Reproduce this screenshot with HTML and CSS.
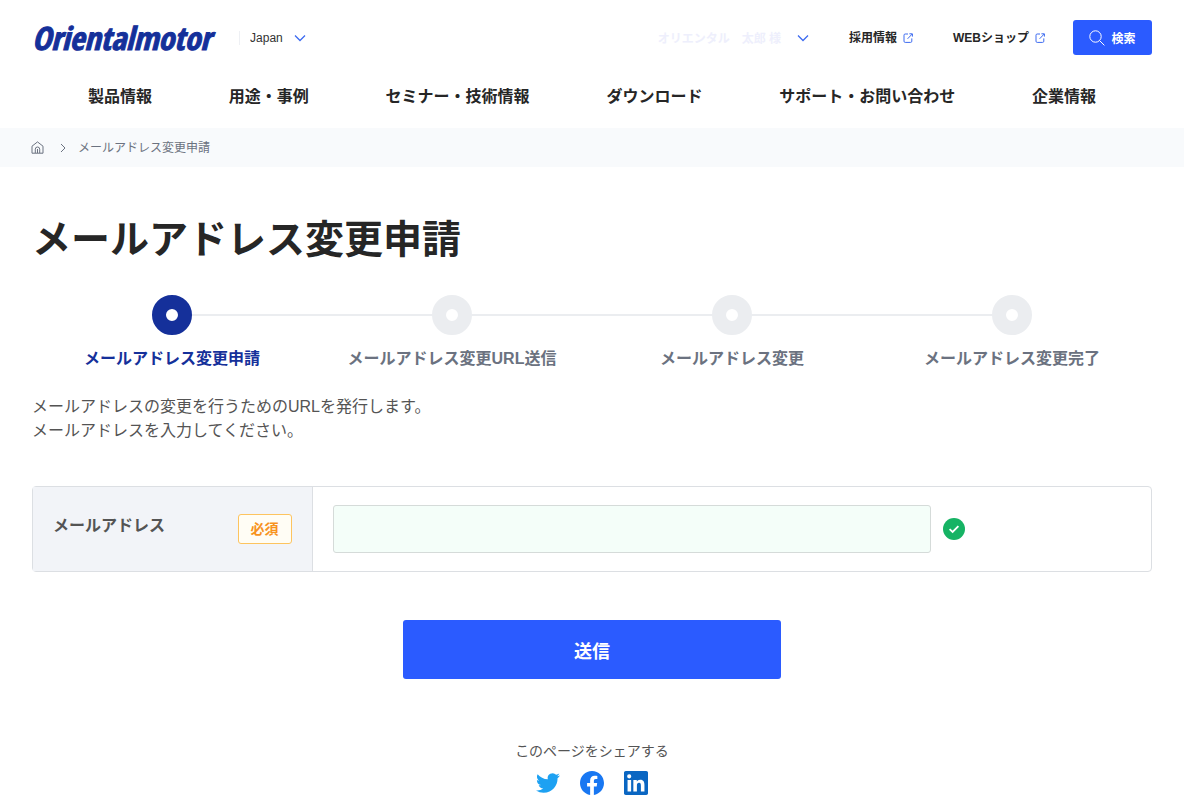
FILE: index.html
```html
<!DOCTYPE html>
<html lang="ja">

<head>
  <meta charset="UTF-8">
  <meta name="viewport" content="width=device-width, initial-scale=1.0">
  <title>メールアドレス変更申請</title>
  <link rel="stylesheet" href="styles.css">
</head>

<body>

  <header class="header">
    <div class="header-top">
      <a class="logo" href="#">Orientalmotor</a>
      <div class="lang">
        <select class="lang-select" aria-label="Country">
          <option>Japan</option>
        </select>
        <svg class="chevron" viewBox="0 0 12 8" width="12" height="8"><path d="M1 1.5 6 6.5 11 1.5"/></svg>
      </div>

      <div class="header-links">
        <button class="user" type="button">
          <span class="user-name">オリエンタル　太郎 様</span>
          <svg class="chevron" viewBox="0 0 12 8" width="12" height="8"><path d="M1 1.5 6 6.5 11 1.5"/></svg>
        </button>
        <a class="ext-link" href="#">採用情報
          <svg viewBox="0 0 10 10" width="10" height="10"><path d="M5 1H2.2Q1 1 1 2.2V8.2Q1 9.4 2.2 9.4H7.6Q8.8 9.4 8.8 8.2V5.4M6.4.8H9.4V3.6M9.2 1 4.6 5.8"/></svg>
        </a>
        <a class="ext-link" href="#">WEBショップ
          <svg viewBox="0 0 10 10" width="10" height="10"><path d="M5 1H2.2Q1 1 1 2.2V8.2Q1 9.4 2.2 9.4H7.6Q8.8 9.4 8.8 8.2V5.4M6.4.8H9.4V3.6M9.2 1 4.6 5.8"/></svg>
        </a>
        <button class="search" type="button">
          <svg viewBox="0 0 16 16" width="16" height="16"><circle cx="6.5" cy="6.5" r="5.7"/><path d="M10.6 10.6 15.4 15.4"/></svg>
          検索
        </button>
      </div>
    </div>

    <nav class="nav">
      <a href="#">製品情報</a>
      <a href="#">用途・事例</a>
      <a href="#">セミナー・技術情報</a>
      <a href="#">ダウンロード</a>
      <a href="#">サポート・お問い合わせ</a>
      <a href="#">企業情報</a>
    </nav>
  </header>

  <div class="breadcrumb">
    <a class="home" href="#" aria-label="ホーム">
      <svg viewBox="0 0 13 13" width="13" height="13"><path d="M1 5.2 6.5.9 12 5.2V12.2H1ZM4.3 12V8.2A2.2 2.2 0 0 1 8.7 8.2V12M6.5 8V12"/></svg>
    </a>
    <svg viewBox="0 0 6 10" width="6" height="10"><path d="M1 1 5 5 1 9"/></svg>
    <span>メールアドレス変更申請</span>
  </div>

  <main class="main">
    <h1>メールアドレス変更申請</h1>

    <ol class="steps">
      <li class="step active">メールアドレス変更申請</li>
      <li class="step">メールアドレス変更URL送信</li>
      <li class="step">メールアドレス変更</li>
      <li class="step">メールアドレス変更完了</li>
    </ol>

    <p class="lead">メールアドレスの変更を行うためのURLを発行します。<br>メールアドレスを入力してください。</p>

    <form>
      <div class="field">
        <div class="field-head">
          <label for="email">メールアドレス</label>
          <span class="required">必須</span>
        </div>
        <div class="field-body">
          <input type="email" id="email" name="email">
          <svg viewBox="0 0 22 22" width="22" height="22"><circle cx="11" cy="11" r="11" fill="#16b364"/><path d="M6.6 11.2 9.6 14 15.4 8.2" fill="none" stroke="#fff" stroke-width="1.8"/></svg>
        </div>
      </div>
      <button class="submit" type="submit">送信</button>
    </form>
  </main>

  <footer class="share">
    <p>このページをシェアする</p>
    <div class="share-icons">
      <a href="#" aria-label="Twitter">
        <svg viewBox="0 0 24 24" width="24" height="24"><path fill="#1da1f2" d="M23.95 4.57a10 10 0 0 1-2.82.77 4.96 4.96 0 0 0 2.16-2.72c-.95.55-2 .96-3.13 1.18a4.92 4.92 0 0 0-8.38 4.48C7.69 8.1 4.07 6.13 1.64 3.16a4.82 4.82 0 0 0-.67 2.48c0 1.7.87 3.21 2.19 4.1a4.9 4.9 0 0 1-2.23-.62v.06a4.92 4.92 0 0 0 3.95 4.83 5 5 0 0 1-2.21.08 4.94 4.94 0 0 0 4.6 3.42A9.87 9.87 0 0 1 0 19.54a13.99 13.99 0 0 0 7.55 2.21c9.05 0 14-7.5 14-13.98 0-.21 0-.42-.02-.63a9.94 9.94 0 0 0 2.46-2.55z"/></svg>
      </a>
      <a href="#" aria-label="Facebook">
        <svg viewBox="0 0 24 24" width="24" height="24"><path fill="#1877f2" d="M24 12.07C24 5.41 18.63 0 12 0S0 5.4 0 12.07C0 18.1 4.39 23.1 10.13 24v-8.44H7.08v-3.49h3.04V9.41c0-3.02 1.8-4.7 4.54-4.7 1.31 0 2.68.24 2.68.24v2.97h-1.5c-1.5 0-1.96.93-1.96 1.89v2.26h3.32l-.53 3.5h-2.8V24C19.62 23.1 24 18.1 24 12.07z"/></svg>
      </a>
      <a href="#" aria-label="LinkedIn">
        <svg viewBox="0 0 24 24" width="24" height="24"><path fill="#0a66c2" d="M20.45 20.45h-3.56v-5.57c0-1.33-.02-3.04-1.85-3.04-1.85 0-2.14 1.45-2.14 2.94v5.67H9.35V9h3.42v1.56h.04c.48-.9 1.64-1.85 3.37-1.85 3.6 0 4.27 2.37 4.27 5.46v6.28zM5.34 7.43a2.07 2.07 0 1 1 0-4.13 2.07 2.07 0 0 1 0 4.13zM7.12 20.45H3.56V9h3.56v11.45zM22.22 0H1.77C.79 0 0 .77 0 1.73v20.54C0 23.23.79 24 1.77 24h20.45c.98 0 1.78-.77 1.78-1.73V1.73C24 .77 23.2 0 22.22 0z"/></svg>
      </a>
    </div>
  </footer>

</body>

</html>
```
FILE: styles.css
```css
*,
*::before,
*::after {
  box-sizing: border-box;
}

body {
  margin: 0;
  font-family: "Liberation Sans", "Noto Sans CJK JP", sans-serif;
  font-size: 16px;
  line-height: 24px;
  color: #545454;
  background: #fff;
}

a {
  color: inherit;
  text-decoration: none;
}

button,
input,
select {
  font-family: inherit;
}

svg {
  flex-shrink: 0;
}

/* Header */
.header {
  padding: 20px 32px 19px;
  color: #262626;
}

.header-top {
  display: flex;
  align-items: center;
  height: 35px;
}

.logo {
  font-family: "Liberation Sans Narrow", "Open Sans Condensed", "Liberation Sans", sans-serif;
  font-size: 32px;
  font-weight: bold;
  font-style: italic;
  line-height: 35px;
  color: #15309a;
  -webkit-text-stroke: 1px #15309a;
}

.lang {
  display: flex;
  align-items: center;
  margin-left: 28px;
  padding-left: 10px;
  border-left: 1px solid #eef0f4;
}

.lang-select {
  appearance: none;
  width: 44px;
  padding: 0;
  border: 0;
  background: none;
  font-size: 12px;
  color: #333;
}

.chevron {
  fill: none;
  stroke: #3d6bf0;
  stroke-width: 1.3;
}

.header-links {
  display: flex;
  align-items: center;
  margin-left: auto;
}

.user {
  display: flex;
  align-items: center;
  gap: 16px;
  margin-right: 40px;
  padding: 0;
  border: 0;
  background: none;
  font-size: 12px;
}

.user-name {
  color: #eeeffc;
  font-weight: bold;
}

.ext-link {
  display: flex;
  align-items: center;
  gap: 6px;
  margin-right: 40px;
  font-size: 12px;
  font-weight: bold;
}

.ext-link + .search {
  margin-left: -12px;
}

.ext-link svg {
  fill: none;
  stroke: #3d6bf0;
}

.search {
  display: flex;
  align-items: center;
  justify-content: center;
  gap: 6px;
  width: 79px;
  height: 35px;
  padding: 0;
  border: 0;
  border-radius: 3px;
  background: #2b5bff;
  color: #fff;
  font-size: 12px;
  font-weight: bold;
}

.search svg {
  fill: none;
  stroke: #fff;
}

.nav {
  display: flex;
  justify-content: space-between;
  margin-top: 30px;
  padding: 0 56px;
  font-weight: bold;
}

/* Breadcrumb */
.breadcrumb {
  display: flex;
  align-items: center;
  height: 39px;
  padding: 0 31px;
  gap: 16px;
  background: #f8fafc;
  font-size: 12px;
  color: #6b7280;
}

.breadcrumb span {
  margin-left: -4px;
}

.breadcrumb svg {
  display: block;
  fill: none;
  stroke: #6b7280;
}

/* Main */
.main {
  padding: 0 32px;
}

h1 {
  margin: 45px 0 27px;
  font-size: 39px;
  line-height: 56px;
  color: #262626;
}

.steps {
  display: grid;
  grid-template-columns: repeat(4, 1fr);
  margin: 0;
  padding: 0;
  list-style: none;
}

.step {
  position: relative;
  text-align: center;
  font-weight: bold;
  color: #6b7280;
}

.step::before {
  content: "";
  display: block;
  width: 40px;
  height: 40px;
  margin: 0 auto 12px;
  border: 14px solid #ebedf0;
  border-radius: 50%;
}

/* line to the next circle */
.step:not(:last-child)::after {
  content: "";
  position: absolute;
  top: 19px;
  left: calc(50% + 20px);
  width: calc(100% - 40px);
  height: 2px;
  background: #ebedf0;
}

.step.active {
  color: #15309a;
}

.step.active::before {
  border-color: #15309a;
}

.lead {
  margin: 24px 0 43px;
}

/* Form */
.field {
  display: flex;
  border: 1px solid #dcdfe3;
  border-radius: 4px;
}

.field-head {
  display: flex;
  justify-content: space-between;
  align-items: center;
  width: 25%;
  padding: 0 20px;
  border-right: 1px solid #dcdfe3;
  background: #f2f4f8;
}

.field-head label {
  font-weight: bold;
  padding-bottom: 6px;
}

.required {
  padding: 2px 12px;
  border: 1px solid #fdc45f;
  border-radius: 3px;
  background: #fffdf5;
  color: #f7931e;
  font-size: 14px;
  font-weight: bold;
}

.field-body {
  flex: 1;
  display: flex;
  align-items: center;
  gap: 12px;
  padding: 18px 20px;
}

.field-body input {
  width: 75%;
  height: 48px;
  padding: 0 12px;
  border: 1px solid #d5dbd9;
  border-radius: 3px;
  background: #f4fef9;
  font-size: 16px;
}

.submit {
  display: block;
  width: 378px;
  max-width: 100%;
  height: 59px;
  margin: 48px auto 0;
  border: 0;
  border-radius: 3px;
  background: #2b5bff;
  color: #fff;
  font-size: 18px;
  font-weight: bold;
}

/* Share */
.share {
  margin-top: 60px;
  text-align: center;
  font-size: 14px;
}

.share p {
  margin: 0 0 8px;
}

.share-icons {
  display: flex;
  justify-content: center;
  gap: 20px;
}

.share-icons svg {
  display: block;
}
```
